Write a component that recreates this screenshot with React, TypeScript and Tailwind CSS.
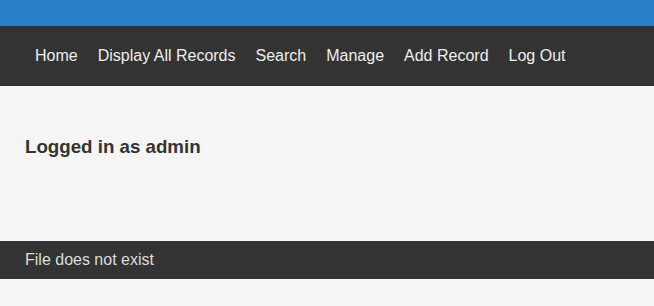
export default function App() {
  const links = ["Home", "Display All Records", "Search", "Manage", "Add Record", "Log Out"];
  return (
    <div className="w-[654px] h-[306px] bg-[#f5f5f5] font-['Liberation_Sans',Arial,sans-serif] overflow-hidden">
      <div className="h-[26px] bg-[#2b7fc7]" />
      <nav className="h-[60px] bg-[#333333] flex items-center pl-[25px]">
        {links.map((l) => (
          <a key={l} className="px-[10px] text-[16px] text-[#eeeeee] leading-[18px]">
            {l}
          </a>
        ))}
      </nav>
      <main className="h-[155px] pt-[50px] px-[25px]">
        <h3 className="text-[18.72px] font-bold text-[#333333] leading-[22px]">Logged in as admin</h3>
      </main>
      <footer className="h-[38px] bg-[#333333] flex items-center px-[25px]">
        <span className="text-[16px] text-[#dddddd] leading-[18px]">File does not exist</span>
      </footer>
    </div>
  );
}
